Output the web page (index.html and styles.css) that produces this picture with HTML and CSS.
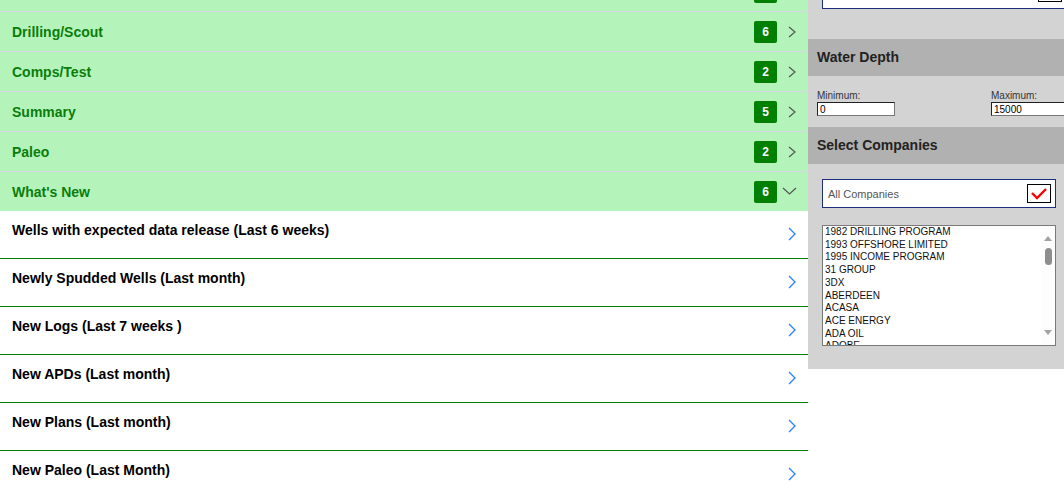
FILE: index.html
```html
<!DOCTYPE html>
<html lang="en">
<head>
    <meta charset="UTF-8">
    <title>Filters</title>
    <link rel="stylesheet" href="styles.css">
</head>
<body>
<div class="page">
    <div class="menu">
        <div class="cat cat-cut">
            <span class="cat-name">Permits</span>
            <span class="badge">4</span>
            <svg class="chev" width="9" height="12" viewBox="0 0 9 12"><polyline points="1,1 7,6 1,11" fill="none" stroke="#555" stroke-width="1.2"/></svg>
        </div>
        <div class="cat">
            <span class="cat-name">Drilling/Scout</span>
            <span class="badge">6</span>
            <svg class="chev" width="9" height="12" viewBox="0 0 9 12"><polyline points="1,1 7,6 1,11" fill="none" stroke="#555" stroke-width="1.2"/></svg>
        </div>
        <div class="cat">
            <span class="cat-name">Comps/Test</span>
            <span class="badge">2</span>
            <svg class="chev" width="9" height="12" viewBox="0 0 9 12"><polyline points="1,1 7,6 1,11" fill="none" stroke="#555" stroke-width="1.2"/></svg>
        </div>
        <div class="cat">
            <span class="cat-name">Summary</span>
            <span class="badge">5</span>
            <svg class="chev" width="9" height="12" viewBox="0 0 9 12"><polyline points="1,1 7,6 1,11" fill="none" stroke="#555" stroke-width="1.2"/></svg>
        </div>
        <div class="cat">
            <span class="cat-name">Paleo</span>
            <span class="badge">2</span>
            <svg class="chev" width="9" height="12" viewBox="0 0 9 12"><polyline points="1,1 7,6 1,11" fill="none" stroke="#555" stroke-width="1.2"/></svg>
        </div>
        <div class="cat cat-open">
            <span class="cat-name">What's New</span>
            <span class="badge">6</span>
            <svg class="chev chev-down" width="15" height="9" viewBox="0 0 15 9"><polyline points="1,1 7.5,7 14,1" fill="none" stroke="#555" stroke-width="1.2"/></svg>
        </div>

        <ul class="sub-list">
            <li>
                <span>Wells with expected data release (Last 6 weeks)</span>
                <svg class="go" width="10" height="14" viewBox="0 0 10 14"><polyline points="2,1 8,7 2,13" fill="none" stroke="#2a80ff" stroke-width="1.3"/></svg>
            </li>
            <li>
                <span>Newly Spudded Wells (Last month)</span>
                <svg class="go" width="10" height="14" viewBox="0 0 10 14"><polyline points="2,1 8,7 2,13" fill="none" stroke="#2a80ff" stroke-width="1.3"/></svg>
            </li>
            <li>
                <span>New Logs (Last 7 weeks )</span>
                <svg class="go" width="10" height="14" viewBox="0 0 10 14"><polyline points="2,1 8,7 2,13" fill="none" stroke="#2a80ff" stroke-width="1.3"/></svg>
            </li>
            <li>
                <span>New APDs (Last month)</span>
                <svg class="go" width="10" height="14" viewBox="0 0 10 14"><polyline points="2,1 8,7 2,13" fill="none" stroke="#2a80ff" stroke-width="1.3"/></svg>
            </li>
            <li>
                <span>New Plans (Last month)</span>
                <svg class="go" width="10" height="14" viewBox="0 0 10 14"><polyline points="2,1 8,7 2,13" fill="none" stroke="#2a80ff" stroke-width="1.3"/></svg>
            </li>
            <li>
                <span>New Paleo (Last Month)</span>
                <svg class="go" width="10" height="14" viewBox="0 0 10 14"><polyline points="2,1 8,7 2,13" fill="none" stroke="#2a80ff" stroke-width="1.3"/></svg>
            </li>
        </ul>
    </div>

    <div class="filters">
        <div class="pick-box pick-cut">
            <span class="pick-label">All Operators</span>
            <span class="tick"></span>
        </div>

        <h3 class="filter-head">Water Depth</h3>
        <div class="range">
            <label class="field">
                <span>Minimum:</span>
                <input type="text" value="0">
            </label>
            <label class="field field-max">
                <span>Maximum:</span>
                <input type="text" value="15000">
            </label>
        </div>

        <h3 class="filter-head">Select Companies</h3>
        <div class="companies">
            <div class="pick-box">
                <span>All Companies</span>
                <span class="tick">
                    <svg width="18" height="12" viewBox="0 0 18 12"><polyline points="2,5 7,10 16,1" fill="none" stroke="#ff0000" stroke-width="2.4"/></svg>
                </span>
            </div>
            <div class="listbox">
                <ul class="options">
                    <li>1982 DRILLING PROGRAM</li>
                    <li>1993 OFFSHORE LIMITED</li>
                    <li>1995 INCOME PROGRAM</li>
                    <li>31 GROUP</li>
                    <li>3DX</li>
                    <li>ABERDEEN</li>
                    <li>ACASA</li>
                    <li>ACE ENERGY</li>
                    <li>ADA OIL</li>
                    <li>ADOBE</li>
                </ul>
                <div class="scroll">
                    <span class="arrow-up"></span>
                    <span class="thumb"></span>
                    <span class="arrow-down"></span>
                </div>
            </div>
        </div>
    </div>
</div>
</body>
</html>
```

FILE: styles.css
```css
html, body {
    margin: 0;
    padding: 0;
    background: #fff;
    overflow: hidden;
}
body {
    font-family: "Liberation Sans", Arial, sans-serif;
    color: #000;
}
.page {
    display: grid;
    grid-template-columns: 808px 256px;
    align-items: start;
}

/* left menu */
.menu {
    display: flex;
    flex-direction: column;
}
.cat {
    display: flex;
    align-items: center;
    height: 39px;
    padding: 0 11px 0 12px;
    background: #b4f4bb;
    border-bottom: 1px solid #d7d6e6;
}
.cat-cut {
    margin-top: -28px;
}
.cat-cut .cat-name {
    visibility: hidden;
}
.cat-open {
    border-bottom: 0;
}
.cat-name {
    flex: 1;
    font-size: 14px;
    font-weight: bold;
    color: #0b7d0b;
}
.badge {
    width: 23px;
    height: 22px;
    line-height: 22px;
    text-align: center;
    background: #008000;
    color: #fff;
    font-size: 12px;
    font-weight: bold;
    border-radius: 2px;
}
.chev {
    margin-left: 11px;
}
.chev-down {
    margin-left: 5px;
}
.sub-list {
    list-style: none;
    margin: 0;
    padding: 0;
}
.sub-list li {
    display: flex;
    justify-content: space-between;
    height: 47px;
    padding: 0 11px 0 12px;
    border-bottom: 1px solid #008000;
    font-size: 14px;
    font-weight: bold;
}
.sub-list li span {
    padding-top: 11px;
}
.go {
    margin-top: 16px;
}

/* right filters */
.filters {
    background: #d3d3d3;
    padding-bottom: 23px;
}
.pick-box {
    display: flex;
    align-items: center;
    justify-content: space-between;
    height: 27px;
    margin: 0 8px 0 14px;
    padding: 0 4px 0 5px;
    background: #fff;
    border: 1px solid #1c2f7c;
    font-size: 11px;
    color: #555;
}
.pick-cut {
    margin-top: -20px;
    margin-right: -2px;
    padding-right: 3px;
}
.pick-cut .pick-label {
    visibility: hidden;
}
.pick-cut .tick {
    margin-top: -4px;
}
.tick {
    width: 22px;
    height: 17px;
    border: 1px solid #000;
    display: flex;
    align-items: center;
    justify-content: center;
    background: #fff;
}
.filter-head {
    margin: 0;
    height: 37px;
    line-height: 37px;
    padding-left: 9px;
    background: #b1b1b1;
    font-size: 14px;
    color: #222;
}
.pick-cut + .filter-head {
    margin-top: 30px;
}
.range {
    display: flex;
    justify-content: space-between;
    height: 51px;
    padding: 14px 0 0 9px;
    box-sizing: border-box;
}
.field {
    display: flex;
    flex-direction: column;
    font-size: 10px;
    color: #333;
}
.field-max {
    width: 73px;
}
.field span {
    line-height: 12px;
}
.field input {
    width: 78px;
    height: 14px;
    margin: 0;
    padding: 0 2px;
    box-sizing: border-box;
    border: 1px solid #222;
    border-right-color: #777;
    border-bottom-color: #777;
    font-family: "Liberation Sans", Arial, sans-serif;
    font-size: 10px;
    color: #000;
}
.field-max input {
    width: 80px;
}
.companies {
    padding-top: 15px;
    display: flex;
    flex-direction: column;
    gap: 17px;
}
.listbox {
    display: flex;
    height: 119px;
    margin: 0 8px 0 14px;
    background: #fff;
    border: 1px solid #7a7a7a;
    overflow: hidden;
}
.options {
    flex: 1;
    list-style: none;
    margin: 0;
    padding: 0 0 0 2px;
    font-size: 10px;
    line-height: 12.7px;
    color: #111;
}
.scroll {
    width: 14px;
    display: flex;
    flex-direction: column;
    align-items: center;
    background: #fdfdfd;
}
.arrow-up {
    margin-top: 10px;
    border: 4px solid transparent;
    border-top: 0;
    border-bottom: 5px solid #a3a3a3;
}
.thumb {
    margin-top: 7px;
    width: 7px;
    height: 17px;
    border-radius: 4px;
    background: #8e8e8e;
}
.arrow-down {
    margin-top: auto;
    margin-bottom: 10px;
    border: 4px solid transparent;
    border-bottom: 0;
    border-top: 5px solid #a3a3a3;
}
```
